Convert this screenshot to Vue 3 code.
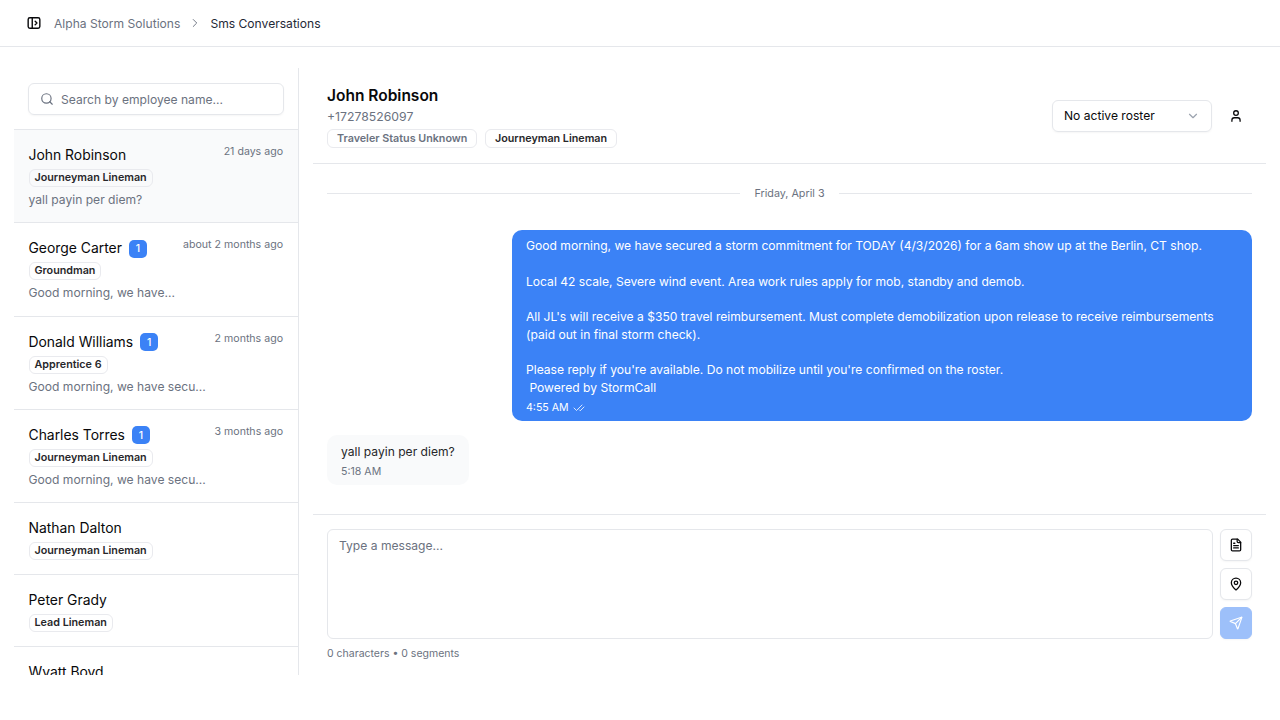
<script setup>
const conversations = [
  { name: "John Robinson", time: "21 days ago", tag: "Journeyman Lineman", preview: "yall payin per diem?", active: true },
  { name: "George Carter", unread: 1, time: "about 2 months ago", tag: "Groundman", preview: "Good morning, we have..." },
  { name: "Donald Williams", unread: 1, time: "2 months ago", tag: "Apprentice 6", preview: "Good morning, we have secu..." },
  { name: "Charles Torres", unread: 1, time: "3 months ago", tag: "Journeyman Lineman", preview: "Good morning, we have secu..." },
  { name: "Nathan Dalton", tag: "Journeyman Lineman" },
  { name: "Peter Grady", tag: "Lead Lineman" },
  { name: "Wyatt Boyd" },
];

const outgoing = `Good morning, we have secured a storm commitment for TODAY (4/3/2026) for a 6am show up at the Berlin, CT shop.

Local 42 scale, Severe wind event. Area work rules apply for mob, standby and demob.

All JL's will receive a $350 travel reimbursement. Must complete demobilization upon release to receive reimbursements (paid out in final storm check).

Please reply if you're available. Do not mobilize until you're confirmed on the roster.
 Powered by StormCall`;
</script>

<template>
  <div class="page">
    <header class="topbar">
      <svg class="toggle" width="14" height="14" viewBox="0 0 24 24" fill="none" stroke="currentColor" stroke-width="2.4" stroke-linecap="round" stroke-linejoin="round">
        <rect x="2" y="3" width="20" height="18" rx="3" />
        <path d="M9 3v18" />
        <path d="m14 9 3 3-3 3" />
      </svg>
      <span class="crumb">Alpha Storm Solutions</span>
      <svg class="crumb-sep" width="14" height="14" viewBox="0 0 24 24" fill="none" stroke="currentColor" stroke-width="1.6" stroke-linecap="round" stroke-linejoin="round">
        <path d="m9 6 6 6-6 6" />
      </svg>
      <span class="crumb current">Sms Conversations</span>
    </header>

    <main class="content">
      <aside class="sidebar">
        <div class="search-wrap">
          <div class="search">
            <svg width="14" height="14" viewBox="0 0 24 24" fill="none" stroke="#6b7280" stroke-width="2" stroke-linecap="round" stroke-linejoin="round">
              <circle cx="11" cy="11" r="8" />
              <path d="m21 21-4.3-4.3" />
            </svg>
            <span>Search by employee name...</span>
          </div>
        </div>
        <div class="list">
          <div
            v-for="c in conversations"
            :key="c.name"
            :class="['item', { active: c.active }]"
          >
            <div class="item-top">
              <div class="item-name">
                <span>{{ c.name }}</span>
                <span v-if="c.unread" class="unread">{{ c.unread }}</span>
              </div>
              <span v-if="c.time" class="item-time">{{ c.time }}</span>
            </div>
            <span v-if="c.tag" class="tag">{{ c.tag }}</span>
            <div v-if="c.preview" class="preview">{{ c.preview }}</div>
          </div>
        </div>
      </aside>

      <section class="chat">
        <div class="chat-head">
          <div>
            <h1>John Robinson</h1>
            <div class="phone">+17278526097</div>
            <div class="tags">
              <span class="tag wide muted">Traveler Status Unknown</span>
              <span class="tag wide">Journeyman Lineman</span>
            </div>
          </div>
          <div class="head-actions">
            <div class="roster">
              <span>No active roster</span>
              <svg width="14" height="14" viewBox="0 0 24 24" fill="none" stroke="#9ca3af" stroke-width="2" stroke-linecap="round" stroke-linejoin="round">
                <path d="m6 9 6 6 6-6" />
              </svg>
            </div>
            <svg class="user" width="14" height="14" viewBox="0 0 24 24" fill="none" stroke="currentColor" stroke-width="2.2" stroke-linecap="round" stroke-linejoin="round">
              <path d="M19 21v-2a4 4 0 0 0-4-4H9a4 4 0 0 0-4 4v2" />
              <circle cx="12" cy="7" r="4" />
            </svg>
          </div>
        </div>

        <div class="messages">
          <div class="date-row"><span>Friday, April 3</span></div>
          <div class="bubble out">
            <div class="text">{{ outgoing }}</div>
            <div class="meta">
              4:55 AM
              <svg width="12" height="12" viewBox="0 0 24 24" fill="none" stroke="currentColor" stroke-width="1.6" stroke-linecap="round" stroke-linejoin="round">
                <path d="M18 6 7 17l-5-5" />
                <path d="m22 10-7.5 7.5L13 16" />
              </svg>
            </div>
          </div>
          <div class="bubble in">
            <div class="text">yall payin per diem?</div>
            <div class="meta">5:18 AM</div>
          </div>
        </div>

        <div class="composer">
          <div class="composer-row">
            <div class="input">Type a message...</div>
            <div class="composer-btns">
              <button class="icon-btn">
                <svg width="14" height="14" viewBox="0 0 24 24" fill="none" stroke="currentColor" stroke-width="2.2" stroke-linecap="round" stroke-linejoin="round">
                  <path d="M15 2H6a2 2 0 0 0-2 2v16a2 2 0 0 0 2 2h12a2 2 0 0 0 2-2V7Z" />
                  <path d="M14 2v4a2 2 0 0 0 2 2h4" />
                  <path d="M10 9H8" />
                  <path d="M16 13H8" />
                  <path d="M16 17H8" />
                </svg>
              </button>
              <button class="icon-btn">
                <svg width="14" height="14" viewBox="0 0 24 24" fill="none" stroke="currentColor" stroke-width="2.2" stroke-linecap="round" stroke-linejoin="round">
                  <path d="M20 10c0 5-5.5 10.2-7.4 11.8a1 1 0 0 1-1.2 0C9.5 20.2 4 15 4 10a8 8 0 0 1 16 0" />
                  <circle cx="12" cy="10" r="3" />
                </svg>
              </button>
              <button class="icon-btn send">
                <svg width="14" height="14" viewBox="0 0 24 24" fill="none" stroke="currentColor" stroke-width="2" stroke-linecap="round" stroke-linejoin="round">
                  <path d="M14.5 21.7a.5.5 0 0 0 .9 0l6.5-19a.5.5 0 0 0-.6-.6l-19 6.5a.5.5 0 0 0 0 .9l7.9 3.2a2 2 0 0 1 1.1 1.1z" />
                  <path d="m21.9 2.1-10.9 10.9" />
                </svg>
              </button>
            </div>
          </div>
          <div class="counter">0 characters • 0 segments</div>
        </div>
      </section>
    </main>
  </div>
</template>

<style scoped>
.page {
  height: 720px;
  overflow: hidden;
  background: #fff;
  color: #09090b;
  font-family: Inter, "Liberation Sans", sans-serif;
}

.topbar {
  height: 46px;
  box-sizing: content-box;
  border-bottom: 1px solid #e5e7eb;
  display: flex;
  align-items: center;
  padding-left: 27px;
  font-size: 12.1px;
}

.toggle {
  margin-right: 13px;
}

.crumb {
  color: #6b7280;
}

.crumb.current {
  color: #1f2937;
}

.crumb-sep {
  color: #6b7280;
  margin: 0 8px;
}

.content {
  display: flex;
  height: 607px;
  margin: 21px 14px 0;
}

.sidebar {
  width: 284px;
  flex-shrink: 0;
  border-right: 1px solid #e5e7eb;
  display: flex;
  flex-direction: column;
  overflow: hidden;
}

.search-wrap {
  padding: 15px 14px 14px;
  border-bottom: 1px solid #e5e7eb;
}

.search {
  height: 32px;
  box-sizing: border-box;
  border: 1px solid #e5e7eb;
  border-radius: 6px;
  box-shadow: 0 1px 2px rgba(0, 0, 0, 0.04);
  display: flex;
  align-items: center;
  gap: 7px;
  padding: 0 11px;
  font-size: 12.1px;
  color: #6b7280;
}

.list {
  overflow: hidden;
}

.item {
  padding: 14px 15px 14px 14.5px;
  border-bottom: 1px solid #e5e7eb;
  display: flex;
  flex-direction: column;
  align-items: flex-start;
}

.item.active {
  background: #f9fafb;
}

.item-top {
  width: 100%;
  display: flex;
  justify-content: space-between;
  margin-bottom: 3px;
}

.item-name {
  display: flex;
  align-items: center;
  gap: 7px;
  padding-top: 1px;
  font-size: 13.9px;
  line-height: 21px;
  color: #09090b;
}

.item-time {
  font-size: 10.6px;
  line-height: 16px;
  color: #6b7280;
}

.unread {
  width: 18px;
  height: 18px;
  border-radius: 5px;
  background: #3b82f6;
  color: #fff;
  font-size: 10.5px;
  font-weight: 500;
  display: flex;
  align-items: center;
  justify-content: center;
}

.tag {
  display: inline-block;
  border: 1px solid #e9eaee;
  border-radius: 6px;
  padding: 0 5px 1px;
  font-size: 10.75px;
  line-height: 15px;
  font-weight: 600;
  color: #27272a;
}

.tag.wide {
  padding: 0 9px;
  line-height: 17px;
}

.tag.muted {
  color: #6b7280;
}

.preview {
  margin-top: 4px;
  margin-bottom: -0.7px;
  font-size: 12.1px;
  line-height: 18px;
  color: #6b7280;
}

.chat {
  flex: 1;
  min-width: 0;
  display: flex;
  flex-direction: column;
}

.chat-head {
  height: 95px;
  padding: 0 14px;
  margin-left: 14px;
  border-bottom: 1px solid #e5e7eb;
  display: flex;
  justify-content: space-between;
  align-items: center;
}

h1 {
  margin: 0;
  font-size: 15.5px;
  line-height: 24px;
  font-weight: 600;
}

.phone {
  font-size: 12.25px;
  line-height: 18px;
  color: #6b7280;
  margin-bottom: 3px;
}

.tags {
  display: flex;
  gap: 7.5px;
}

.head-actions {
  display: flex;
  align-items: center;
  gap: 16.5px;
}

.roster {
  width: 160px;
  height: 32px;
  box-sizing: border-box;
  border: 1px solid #e5e7eb;
  border-radius: 6px;
  box-shadow: 0 1px 2px rgba(0, 0, 0, 0.04);
  display: flex;
  align-items: center;
  justify-content: space-between;
  padding: 0 11px;
  font-size: 12.1px;
}

.user {
  margin-right: 9.5px;
}

.messages {
  height: 350px;
  padding: 0 14px 0 28px;
  display: flex;
  flex-direction: column;
  box-sizing: border-box;
}

.date-row {
  display: flex;
  align-items: center;
  gap: 14px;
  height: 18px;
  margin-top: 20px;
  margin-bottom: 28px;
  font-size: 10.75px;
  color: #6b7280;
}

.date-row::before,
.date-row::after {
  content: "";
  flex: 1;
  border-top: 1px solid #e5e7eb;
}

.bubble {
  border-radius: 10px;
  padding: 7px 14px;
  font-size: 12.1px;
  line-height: 17.75px;
}

.text {
  white-space: pre-wrap;
}

.bubble.out {
  align-self: flex-end;
  width: 740px;
  box-sizing: border-box;
  background: #3b82f6;
  color: #fff;
  margin-bottom: 14px;
  padding-bottom: 6px;
}

.bubble.in {
  align-self: flex-start;
  background: #f9fafb;
  color: #27272a;
  padding-top: 8px;
  padding-bottom: 6px;
}

.meta {
  margin-top: 4px;
  font-size: 10.6px;
  line-height: 14px;
  display: flex;
  align-items: center;
  gap: 4px;
}

.bubble.in .meta {
  color: #6b7280;
}

.composer {
  margin-left: 14px;
  border-top: 1px solid #e5e7eb;
  padding: 14px 14px 0;
}

.composer-row {
  display: flex;
  gap: 7px;
}

.input {
  flex: 1;
  height: 110px;
  box-sizing: border-box;
  border: 1px solid #e5e7eb;
  border-radius: 6px;
  padding: 7px 11px;
  font-size: 12.1px;
  line-height: 17px;
  color: #6b7280;
}

.composer-btns {
  display: flex;
  flex-direction: column;
  justify-content: space-between;
}

.icon-btn {
  width: 32px;
  height: 32px;
  padding: 0;
  background: #fff;
  border: 1px solid #e5e7eb;
  border-radius: 6px;
  color: #09090b;
  box-shadow: 0 1px 2px rgba(0, 0, 0, 0.04);
  display: flex;
  align-items: center;
  justify-content: center;
}

.icon-btn.send {
  background: #9dc0fa;
  border-color: #9dc0fa;
  color: #fff;
}

.counter {
  margin-top: 7px;
  font-size: 10.5px;
  line-height: 16px;
  color: #6b7280;
}
</style>
